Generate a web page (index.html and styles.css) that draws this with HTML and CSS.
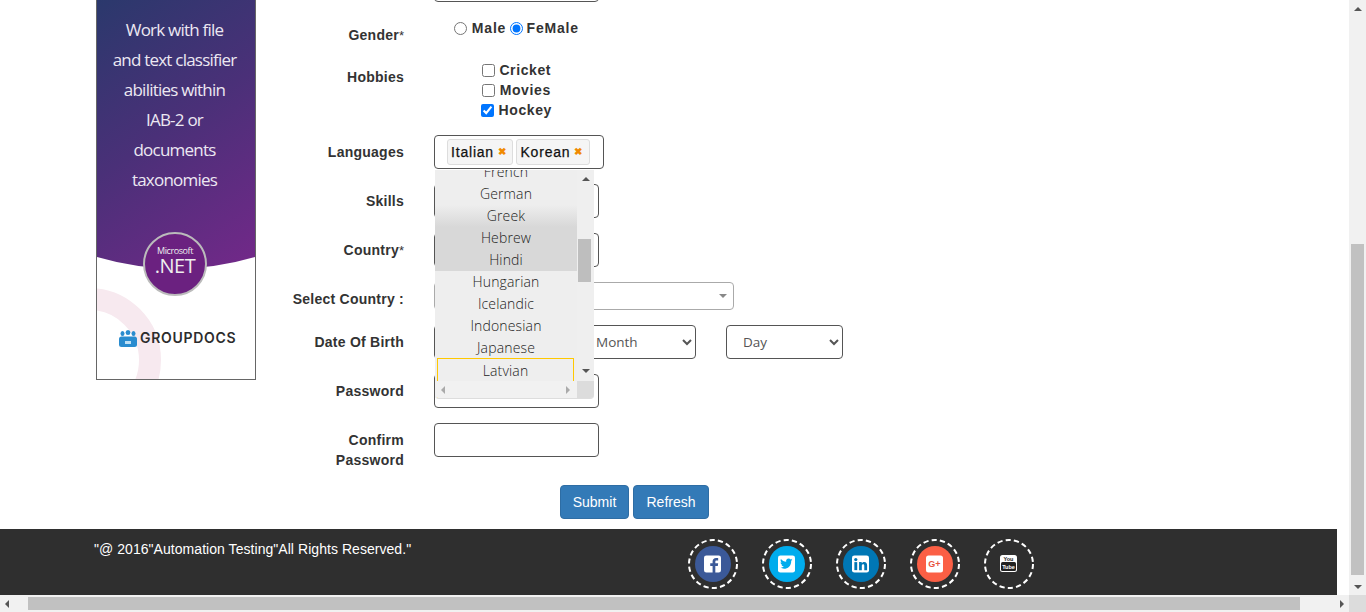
FILE: index.html
```html
<!DOCTYPE html>
<html lang="en">
<head>
  <meta charset="UTF-8">
  <title>Register</title>
  <link rel="stylesheet" href="styles.css">
</head>
<body>
  <div class="page">
    <div class="main">
      <div class="ad">
        <div class="ad-top">
          <p>Work with file</p>
          <p>and text classifier</p>
          <p>abilities within</p>
          <p>IAB-2 or</p>
          <p>documents</p>
          <p>taxonomies</p>
        </div>
        <div class="ad-ring"></div>
        <div class="ad-badge">
          <span class="ad-ms">Microsoft</span>
          <span class="ad-net">.NET</span>
        </div>
        <div class="ad-logo">
          <svg width="18" height="17" viewBox="0 0 18 17">
            <ellipse cx="9" cy="2.500" rx="2.400" ry="2.500" fill="#2a8ccf"/>
            <ellipse cx="3.500" cy="3.500" rx="2" ry="2.500" fill="#2a8ccf"/>
            <ellipse cx="14.500" cy="3.500" rx="2" ry="2.500" fill="#2a8ccf"/>
            <rect x="0" y="6.500" width="18" height="10.500" rx="2.500" fill="#2a8ccf"/>
            <rect x="6" y="11" width="6" height="3" fill="#bfe0f5"/>
          </svg>
          <span>GROUPDOCS</span>
        </div>
      </div>

      <form class="form">
        <div class="row">
          <label class="lbl"></label>
          <input class="field" type="text">
        </div>
        <div class="row row-gender">
          <label class="lbl">Gender<small>*</small></label>
          <div class="choices gender">
            <input type="radio" name="gender"> Male
            <input type="radio" name="gender" checked> FeMale
          </div>
        </div>
        <div class="row">
          <label class="lbl">Hobbies</label>
          <div class="choices">
            <div class="line"><input type="checkbox"> Cricket</div>
            <div class="line"><input type="checkbox"> Movies</div>
            <div class="line"><input type="checkbox" checked> Hockey</div>
          </div>
        </div>
        <div class="row">
          <label class="lbl">Languages</label>
          <div class="multi">
            <span class="tag">Italian <b>&#10006;</b></span>
            <span class="tag">Korean <b>&#10006;</b></span>
          </div>
        </div>
        <div class="row">
          <label class="lbl">Skills</label>
          <input class="field" type="text">
        </div>
        <div class="row">
          <label class="lbl">Country<small>*</small></label>
          <input class="field" type="text">
        </div>
        <div class="row">
          <label class="lbl">Select Country :</label>
          <div class="select2"><i class="tri-down"></i></div>
        </div>
        <div class="row">
          <label class="lbl">Date Of Birth</label>
          <div class="dob">
            <select class="sel sel-year"><option>Year</option></select>
            <select class="sel sel-month"><option>Month</option></select>
            <select class="sel sel-day"><option>Day</option></select>
          </div>
        </div>
        <div class="row">
          <label class="lbl">Password</label>
          <input class="field" type="password">
        </div>
        <div class="row">
          <label class="lbl">Confirm<br>Password</label>
          <input class="field" type="password">
        </div>
        <div class="actions">
          <button class="btn btn-submit" type="button">Submit</button>
          <button class="btn btn-refresh" type="button">Refresh</button>
        </div>
      </form>
    </div>

    <footer class="footer">
      <div class="copy">"@ 2016"Automation Testing"All Rights Reserved."</div>
      <div class="social">
        <svg width="50" height="50" viewBox="0 0 50 50">
          <circle class="dash" cx="25" cy="25" r="24"/>
          <circle cx="25" cy="25" r="18" fill="#3b5998"/>
          <g transform="translate(16 16.500) scale(.944) translate(-16 -16)">
            <path fill="#fff" d="M18.500 16h13a2.500 2.500 0 0 1 2.500 2.500v13a2.500 2.500 0 0 1-2.500 2.500H28v-7h2.600l.4-2.800h-3v-1.700c0-.8.300-1.300 1.400-1.300H31v-2.500c-.4 0-1.300-.1-2.200-.1-2.200 0-3.700 1.300-3.700 3.700v1.900h-2.500V27h2.500v7h-6.600a2.500 2.500 0 0 1-2.500-2.500v-13a2.500 2.500 0 0 1 2.500-2.500z"/>
          </g>
        </svg>
        <svg width="50" height="50" viewBox="0 0 50 50">
          <circle class="dash" cx="25" cy="25" r="24"/>
          <circle cx="25" cy="25" r="18" fill="#00aced"/>
          <g transform="translate(16 16.500) scale(.944) translate(-16 -16)">
            <rect x="16" y="16" width="18" height="18" rx="2.500" fill="#fff"/>
            <path fill="#00aced" d="M31.500 20.500c-.5.200-1 .4-1.600.4.600-.3 1-.8 1.200-1.400-.5.300-1.100.5-1.700.7a2.700 2.700 0 0 0-4.700 2.500c-2.300-.1-4.300-1.200-5.600-2.900-.7 1.200-.4 2.800.8 3.600-.4 0-.9-.1-1.200-.3 0 1.300.9 2.400 2.200 2.700-.4.100-.8.100-1.200 0 .3 1.100 1.300 1.800 2.500 1.900-1.100.9-2.500 1.300-3.900 1.100 4.600 2.900 11.900.5 11.700-7.300.6-.3 1.100-.8 1.500-1z"/>
          </g>
        </svg>
        <svg width="50" height="50" viewBox="0 0 50 50">
          <circle class="dash" cx="25" cy="25" r="24"/>
          <circle cx="25" cy="25" r="18" fill="#0077b5"/>
          <g transform="translate(16 16.500) scale(.944) translate(-16 -16)">
            <rect x="16" y="16" width="18" height="18" rx="2.500" fill="#fff"/>
            <rect x="18.500" y="23" width="3" height="8.500" fill="#0077b5"/>
            <circle cx="20" cy="20.300" r="1.700" fill="#0077b5"/>
            <path fill="#0077b5" d="M23.500 23h2.800v1.200c.5-.8 1.400-1.400 2.600-1.400 2.300 0 3.100 1.400 3.100 3.700v5h-3v-4.500c0-1-.3-1.700-1.200-1.700s-1.400.7-1.400 1.700v4.500h-2.900z"/>
          </g>
        </svg>
        <svg width="50" height="50" viewBox="0 0 50 50">
          <circle class="dash" cx="25" cy="25" r="24"/>
          <circle cx="25" cy="25" r="18" fill="#fb5f45"/>
          <rect x="16" y="16.500" width="17" height="17" rx="2.500" fill="#fff"/>
          <text class="gplus" x="24.500" y="28" text-anchor="middle">G+</text>
        </svg>
        <svg width="50" height="50" viewBox="0 0 50 50">
          <circle class="dash" cx="25" cy="25" r="24"/>
          <rect x="16" y="16" width="17" height="17" rx="2.500" fill="#fff"/>
          <text class="yt" x="24.500" y="22" text-anchor="middle" fill="#222">You</text>
          <rect x="17" y="23" width="15" height="9" rx="1.500" fill="#222"/>
          <text class="yt" x="24.500" y="30" text-anchor="middle" fill="#fff">Tube</text>
        </svg>
      </div>
    </footer>
  </div>

  <!-- open language list -->
  <div class="lang-drop">
    <ul class="lang-list">
      <li>French</li>
      <li>German</li>
      <li class="sel-first">Greek</li>
      <li class="sel-item">Hebrew</li>
      <li class="sel-item">Hindi</li>
      <li>Hungarian</li>
      <li>Icelandic</li>
      <li>Indonesian</li>
      <li>Japanese</li>
      <li class="focused">Latvian</li>
    </ul>
    <div class="drop-vbar">
      <i class="tri-up"></i>
      <span class="drop-thumb"></span>
      <i class="tri-down dark"></i>
    </div>
    <div class="drop-hbar">
      <i class="tri-left"></i>
      <i class="tri-right"></i>
    </div>
    <div class="drop-corner"></div>
  </div>

  <!-- window scrollbars -->
  <div class="vbar">
    <i class="tri-up"></i>
    <span class="vthumb"></span>
    <i class="tri-down dark"></i>
  </div>
  <div class="hbar">
    <i class="tri-left dark"></i>
    <span class="hthumb"></span>
    <i class="tri-right dark"></i>
  </div>
  <div class="corner"></div>
</body>
</html>
```

FILE: styles.css
```css
html, body {
  height: 100%;
  margin: 0;
  overflow: hidden;
}

body {
  font-family: "Liberation Sans", Arial, sans-serif;
  font-size: 14px;
  line-height: 20px;
  color: #333;
  background-color: #fff;
}

/* the page is scrolled down a bit in the shot */
.page {
  margin-top: -32px;
  width: 1337px;
}

.main {
  display: flex;
  align-items: flex-start;
  padding-left: 96px;
}

/* ad */
.ad {
  position: relative;
  box-sizing: border-box;
  width: 160px;
  height: 412px;
  border: 1px solid #666;
  border-top: 0;
  overflow: hidden;
  background-color: #fff;
}

.ad-top {
  box-sizing: border-box;
  height: 310px;
  padding: 47px 3px 0 0;
  clip-path: path('M0 0H158V289Q79 312 0 289Z');
  background: linear-gradient(145deg, #253a6a 0%, #4a3078 50%, #75288a 100%);
  text-align: center;
  font-family: "Open Sans", sans-serif;
  font-size: 17px;
  letter-spacing: -0.78px;
  line-height: 30px;
  color: #ece8f2;
}

.ad-top p {
  margin: 0;
}

.ad-ring {
  position: absolute;
  left: -80px;
  top: 320px;
  width: 100px;
  height: 100px;
  border: 22px solid #f7e9ef;
  border-radius: 50%;
}

.ad-badge {
  position: absolute;
  left: 46px;
  top: 264px;
  box-sizing: border-box;
  width: 64px;
  height: 64px;
  border: 2px solid #bbb;
  border-radius: 50%;
  background-color: #6b2180;
  color: #eee;
  text-align: center;
  font-family: "Open Sans", sans-serif;
}

.ad-ms {
  display: block;
  margin-top: 12px;
  font-size: 9px;
  line-height: 10px;
  letter-spacing: -0.4px;
}

.ad-net {
  display: block;
  font-size: 20px;
  line-height: 20px;
  letter-spacing: -0.5px;
}

.ad-logo {
  position: absolute;
  left: 22px;
  top: 360px;
  display: flex;
  align-items: center;
  gap: 3px;
  font-family: "Inter", sans-serif;
  font-weight: 600;
  font-size: 14px;
  letter-spacing: 0.7px;
  color: #2c2c2c;
}

/* form */
.form {
  width: 700px;
}

.row {
  display: flex;
  align-items: flex-start;
  margin-bottom: 15px;
}

.row-gender {
  margin-top: 16px;
}

.lbl {
  width: 148px;
  margin-right: 30px;
  padding-top: 7px;
  text-align: right;
  font-weight: bold;
  letter-spacing: 0.25px;
}

.lbl small {
  font-size: 13px;
  font-weight: normal;
  letter-spacing: 0;
  line-height: 10px;
}

.field {
  box-sizing: border-box;
  width: 165px;
  height: 34px;
  border: 1px solid #555;
  border-radius: 4px;
  background-color: #fff;
}

.choices {
  width: 165px;
  text-align: center;
  font-weight: bold;
  letter-spacing: 0.6px;
  white-space: nowrap;
}

.choices input {
  margin: 0;
  vertical-align: -2px;
}

.choices.gender {
  height: 20px;
  letter-spacing: 0.8px;
  word-spacing: -1px;
}

.choices.gender input:first-child {
  margin-right: 1px;
}

.line {
  height: 20px;
}

.multi {
  box-sizing: border-box;
  width: 170px;
  height: 34px;
  padding: 3px 0 0 12px;
  border: 1px solid #555;
  border-radius: 4px;
  display: flex;
  gap: 3px;
}

.tag {
  box-sizing: border-box;
  height: 26px;
  padding: 2px 3px;
  border: 1px solid #ddd;
  border-radius: 3px;
  background-color: #f5f5f5;
  font-size: 14px;
  letter-spacing: 0.8px;
  color: #111;
  -webkit-text-stroke: 0.25px #111;
  white-space: nowrap;
}

.tag b {
  margin: 0 3px 0 -1px;
  font-size: 10px;
  color: #f08a00;
  vertical-align: 2px;
  -webkit-text-stroke: 0;
}

.select2 {
  position: relative;
  box-sizing: border-box;
  width: 300px;
  height: 28px;
  border: 1px solid #aaa;
  border-radius: 4px;
}

.select2 .tri-down {
  position: absolute;
  right: 6px;
  top: 11px;
  border-top-color: #888;
}

.dob {
  display: flex;
}

.sel {
  box-sizing: border-box;
  height: 34px;
  padding-left: 12px;
  border: 1px solid #555;
  border-radius: 4px;
  background-color: #fff;
  font-family: "Open Sans", sans-serif;
  font-size: 13.500px;
  color: #555;
}

.sel-year {
  width: 120px;
  margin-right: 30px;
}

.sel-month {
  width: 112px;
  margin-right: 30px;
  padding-left: 7px;
}

.sel-day {
  width: 117px;
}

.actions {
  display: flex;
  gap: 4px;
  margin: 0 0 10px 304px;
}

.btn {
  height: 34px;
  padding: 0;
  border: 1px solid #2e6da4;
  border-radius: 4px;
  background-color: #337ab7;
  color: #fff;
  font-family: "Liberation Sans", Arial, sans-serif;
  font-size: 14px;
}

.btn-submit {
  width: 69px;
}

.btn-refresh {
  width: 76px;
}

/* footer */
.footer {
  display: flex;
  height: 66px;
  box-sizing: border-box;
  padding: 10px 0 0 94px;
  background-color: #2f2f2f;
}

.copy {
  width: 594px;
  color: #fff;
  letter-spacing: 0.05px;
}

.social {
  display: flex;
  gap: 24px;
}

.dash {
  fill: none;
  stroke: #fff;
  stroke-width: 2;
  stroke-dasharray: 5.200 3.180;
}

.gplus {
  font-size: 9px;
  font-weight: bold;
  fill: #e8553f;
}

.yt {
  font-size: 5.500px;
  font-weight: bold;
}

/* dropdown that hangs over the form */
.lang-drop {
  position: absolute;
  left: 435px;
  top: 170px;
  width: 159px;
  height: 229px;
  overflow: hidden;
  border-radius: 0 0 4px 4px;
  background-color: #eee;
  border-bottom: 1px solid #ddd;
  box-sizing: border-box;
}

.lang-list {
  list-style: none;
  margin: -9px 0 0;
  padding: 0;
  width: 142px;
  font-family: "Open Sans", sans-serif;
  font-weight: 300;
  font-size: 14px;
  letter-spacing: 0.15px;
  line-height: 22px;
  text-align: center;
  color: #222;
}

.lang-list li {
  height: 22px;
}

.sel-first {
  background: linear-gradient(#eee, #d8d8d8);
}

.sel-item {
  background-color: #d8d8d8;
}

.lang-list .focused {
  margin: -1px 3px 0 2px;
  padding-top: 2px;
  height: 40px;
  box-shadow: inset 0 0 0 1px #ffc800;
}

.drop-vbar {
  position: absolute;
  right: 0;
  top: 0;
  width: 17px;
  height: 211px;
  background-color: #efefef;
}

.drop-vbar .tri-up {
  position: absolute;
  left: 5px;
  top: 7px;
}

.drop-vbar .tri-down {
  position: absolute;
  left: 5px;
  bottom: 8px;
}

.drop-thumb {
  position: absolute;
  left: 1px;
  top: 69px;
  width: 13px;
  height: 43px;
  background-color: #bebebe;
}

.drop-hbar {
  position: absolute;
  left: 0;
  bottom: 0;
  width: 142px;
  height: 17px;
  background-color: #f1f1f1;
}

.drop-hbar .tri-left {
  position: absolute;
  left: 6px;
  top: 5px;
}

.drop-hbar .tri-right {
  position: absolute;
  right: 7px;
  top: 5px;
}

.drop-corner {
  position: absolute;
  right: 0;
  bottom: 0;
  width: 17px;
  height: 17px;
  background-color: #dcdcdc;
}

/* window scrollbars */
.vbar {
  position: absolute;
  left: 1349px;
  top: 0;
  width: 17px;
  height: 595px;
  background-color: #f1f1f1;
}

.vbar .tri-up {
  position: absolute;
  left: 5px;
  top: 7px;
}

.vthumb {
  position: absolute;
  left: 2px;
  top: 244px;
  width: 13px;
  height: 331px;
  background-color: #c1c1c1;
}

.vbar .tri-down {
  position: absolute;
  left: 5px;
  bottom: 6px;
}

.hbar {
  position: absolute;
  left: 0;
  top: 595px;
  width: 1349px;
  height: 17px;
  background-color: #f1f1f1;
}

.hthumb {
  position: absolute;
  left: 28px;
  top: 2px;
  width: 1272px;
  height: 13px;
  background-color: #c1c1c1;
}

.hbar .tri-left {
  position: absolute;
  left: 5px;
  top: 5px;
}

.hbar .tri-right {
  position: absolute;
  right: 5px;
  top: 5px;
}

.corner {
  position: absolute;
  left: 1349px;
  top: 595px;
  width: 17px;
  height: 17px;
  background-color: #dcdcdc;
}

/* arrows */
.tri-up, .tri-down, .tri-left, .tri-right {
  display: block;
  width: 0;
  height: 0;
  border-style: solid;
  border-color: transparent;
}

.tri-up {
  border-width: 0 4px 4px;
  border-bottom-color: #555;
}

.tri-down {
  border-width: 4px 4px 0;
  border-top-color: #555;
}

.tri-left {
  border-width: 4px 4px 4px 0;
  border-right-color: #aaa;
}

.tri-right {
  border-width: 4px 0 4px 4px;
  border-left-color: #aaa;
}

.tri-left.dark {
  border-right-color: #555;
}

.tri-right.dark {
  border-left-color: #555;
}
```
